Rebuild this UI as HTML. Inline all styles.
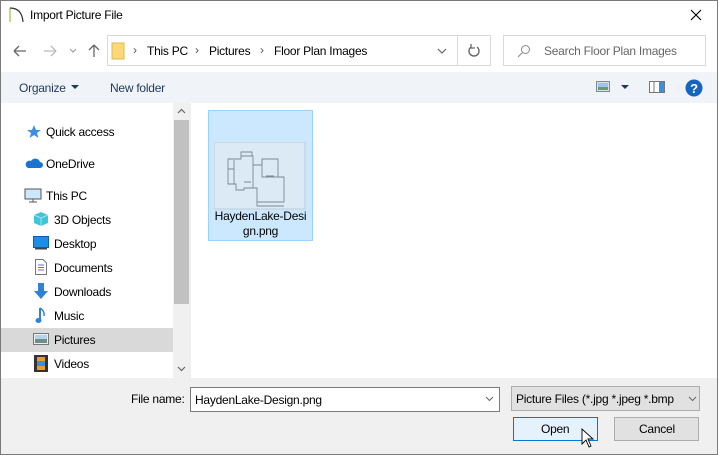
<!DOCTYPE html>
<html><head><style>
*{margin:0;padding:0;box-sizing:border-box}
body{width:718px;height:455px;overflow:hidden;font-family:"Liberation Sans",sans-serif;font-size:12px;color:#000;background:#fff;position:relative;letter-spacing:-0.25px}
.a{position:absolute;white-space:nowrap}
.win{position:absolute;left:0;top:0;width:718px;height:455px;border:1px solid #7a7a7a}
.nav .t{position:absolute;left:54px;font-size:12px}
</style></head><body>
<div class="win"></div>
<svg class="a" style="left:8px;top:6px" width="18" height="18"><path d="M2 2 V16" stroke="#8dc63f" stroke-width="1.2"/><path d="M2 2 Q14 2 15 16" stroke="#333" stroke-width="1.2" fill="none"/></svg>
<div class="a" style="left:30px;top:8px;font-size:12px">Import Picture File</div>
<svg class="a" style="left:690px;top:9px" width="12" height="12"><path d="M1 1L11 11M11 1L1 11" stroke="#000" stroke-width="1.1"/></svg>
<svg class="a" style="left:12px;top:43px" width="90" height="16"><path d="M2 8H14M2 8L7 3M2 8L7 13" stroke="#666" stroke-width="1.3" fill="none"/><path d="M32 8H44M44 8L39 3M44 8L39 13" stroke="#bbb" stroke-width="1.3" fill="none"/><path d="M58 6L61 9L64 6" stroke="#999" stroke-width="1.1" fill="none"/><path d="M82 14V2M82 2L77 7M82 2L87 7" stroke="#666" stroke-width="1.3" fill="none"/></svg>
<div class="a" style="left:107px;top:35px;width:384px;height:31px;border:1px solid #d9d9d9"></div>
<div class="a" style="left:457px;top:36px;width:1px;height:29px;background:#d9d9d9"></div>
<svg class="a" style="left:111px;top:42px" width="14" height="18"><rect x="1" y="1" width="12" height="16" fill="#fbd979" stroke="#e0b846"/></svg>
<div class="a" style="left:133px;top:43px;font-size:12px;color:#555">›</div>
<div class="a" style="left:147px;top:44px">This PC</div>
<div class="a" style="left:195px;top:43px;color:#555">›</div>
<div class="a" style="left:209px;top:44px">Pictures</div>
<div class="a" style="left:260px;top:43px;color:#555">›</div>
<div class="a" style="left:274px;top:44px">Floor Plan Images</div>
<svg class="a" style="left:437px;top:47px" width="10" height="8"><path d="M1 2L5 6L9 2" stroke="#666" stroke-width="1.2" fill="none"/></svg>
<svg class="a" style="left:467px;top:43px" width="14" height="16"><path d="M10 4A5 5 0 1 1 4 4" stroke="#666" stroke-width="1.4" fill="none"/><path d="M4 1V5H8" stroke="#666" stroke-width="1.3" fill="none"/></svg>
<div class="a" style="left:503px;top:35px;width:203px;height:31px;border:1px solid #d9d9d9"></div>
<svg class="a" style="left:517px;top:44px" width="14" height="14"><circle cx="8.5" cy="5.5" r="4" stroke="#888" fill="none"/><path d="M5.5 8.5L1 13" stroke="#888"/></svg>
<div class="a" style="left:544px;top:44px;color:#666">Search Floor Plan Images</div>
<div class="a" style="left:1px;top:72px;width:716px;height:31px;background:#f0f4f9"></div>
<div class="a" style="left:19px;top:81px;color:#1e395b">Organize</div>
<svg class="a" style="left:71px;top:85px" width="8" height="5"><path d="M0 0H8L4 4Z" fill="#1e395b"/></svg>
<div class="a" style="left:110px;top:81px;color:#1e395b">New folder</div>
<svg class="a" style="left:596px;top:81px" width="14" height="12"><rect x="0.5" y="0.5" width="13" height="10" fill="#dde" stroke="#7a8a9a"/><rect x="2" y="6" width="10" height="3" fill="#6a9a6a"/><rect x="2" y="2" width="10" height="4" fill="#9ec5e8"/></svg>
<svg class="a" style="left:621px;top:85px" width="8" height="5"><path d="M0 0H8L4 4Z" fill="#1e395b"/></svg>
<svg class="a" style="left:649px;top:81px" width="17" height="13"><rect x="0.5" y="0.5" width="15" height="11" fill="#fff" stroke="#777"/><rect x="10" y="1" width="5" height="10" fill="#3c8ee0"/><path d="M5 1V12" stroke="#777"/></svg>
<svg class="a" style="left:685px;top:79px" width="18" height="18"><circle cx="9" cy="9" r="8.5" fill="#1565c0"/><text x="9" y="14" text-anchor="middle" font-family="Liberation Sans" font-weight="bold" font-size="13" fill="#fff">?</text></svg>
<div class="a" style="left:1px;top:328px;width:172px;height:24px;background:#d9d9d9"></div>
<div class="a" style="left:173px;top:103px;width:17px;height:275px;background:#f0f0f0"></div>
<div class="a" style="left:174px;top:120px;width:15px;height:184px;background:#c1c1c1"></div>
<svg class="a" style="left:177px;top:108px" width="9" height="6"><path d="M1 5L4.5 1.5L8 5" stroke="#666" stroke-width="1.2" fill="none"/></svg>
<svg class="a" style="left:177px;top:366px" width="9" height="6"><path d="M1 1L4.5 4.5L8 1" stroke="#666" stroke-width="1.2" fill="none"/></svg>
<div class="a" style="left:190px;top:103px;width:1px;height:275px;background:#eee"></div>
<div class="nav">
<svg class="a" style="left:26px;top:124px" width="16" height="16"><path d="M8 1L10 6H15L11 9L12.5 14L8 11L3.5 14L5 9L1 6H6Z" fill="#3a8ee6"/></svg>
<div class="a" style="left:46px;top:125px">Quick access</div>
<svg class="a" style="left:25px;top:157px" width="18" height="12"><path d="M3 11H15A3 3 0 0 0 15 5A5 5 0 0 0 6 4A3.5 3.5 0 0 0 3 11Z" fill="#1a73d0"/></svg>
<div class="a" style="left:46px;top:157px">OneDrive</div>
<svg class="a" style="left:24px;top:188px" width="18" height="16"><rect x="1" y="1" width="16" height="10" fill="#cce8ff" stroke="#555"/><path d="M9 11V14M5 14H13" stroke="#555"/></svg>
<div class="a" style="left:46px;top:189px">This PC</div>
<svg class="a" style="left:33px;top:211px" width="16" height="16"><path d="M8 1L15 4V12L8 15L1 12V4Z" fill="#3fc5d8"/><path d="M1 4L8 7L15 4M8 7V15" stroke="#9ee6f0" fill="none"/></svg>
<div class="t a" style="top:213px">3D Objects</div>
<svg class="a" style="left:33px;top:236px" width="16" height="14"><rect x="0.5" y="0.5" width="15" height="11" fill="#1b8ee6" stroke="#0a5fa8"/><rect x="2" y="12" width="12" height="1.5" fill="#444"/></svg>
<div class="t a" style="top:237px">Desktop</div>
<svg class="a" style="left:35px;top:259px" width="12" height="16"><path d="M0.5 0.5H8L11.5 4V15.5H0.5Z" fill="#fff" stroke="#777"/><path d="M3 6H9M3 8.5H9M3 11H9" stroke="#4a7fc0"/></svg>
<div class="t a" style="top:261px">Documents</div>
<svg class="a" style="left:33px;top:283px" width="16" height="17"><path d="M5 0H11V8H15L8 16L1 8H5Z" fill="#2f82d8"/></svg>
<div class="t a" style="top:285px">Downloads</div>
<svg class="a" style="left:35px;top:307px" width="12" height="17"><path d="M5 1V13" stroke="#2f82d8" stroke-width="2"/><ellipse cx="3.5" cy="13.5" rx="3" ry="2.5" fill="#2f82d8"/><path d="M5 1Q10 4 9 9" stroke="#2f82d8" stroke-width="1.5" fill="none"/></svg>
<div class="t a" style="top:309px">Music</div>
<svg class="a" style="left:33px;top:333px" width="16" height="12"><rect x="0.5" y="0.5" width="15" height="11" fill="#eee" stroke="#777"/><rect x="2" y="6" width="12" height="4" fill="#6e8e86"/><rect x="2" y="2" width="12" height="4" fill="#b7d3ea"/></svg>
<div class="t a" style="top:333px">Pictures</div>
<svg class="a" style="left:34px;top:355px" width="14" height="17"><rect x="0" y="0" width="14" height="17" fill="#333"/><rect x="3" y="2" width="8" height="13" fill="#e0a030"/><rect x="3" y="6" width="8" height="5" fill="#3a8ee6"/></svg>
<div class="t a" style="top:357px">Videos</div>
</div>
<div class="a" style="left:208px;top:110px;width:105px;height:131px;background:#cce8ff;border:1px solid #99d1ff"></div>
<svg class="a" style="left:214px;top:142px" width="92" height="68"><rect x="0" y="0" width="91" height="67" fill="#dceaf6" stroke="#c0ccd8"/><g stroke="#7d8893" fill="none" stroke-width="0.9"><path d="M14 17H27V14H39V23H48V17H64V35H70V60H43V46H30V48H22V42H14Z"/><path d="M27 14V10H38V14"/><path d="M39 23V46H43"/><path d="M48 17V35H64"/><path d="M14 27H20M30 40H37"/><path d="M20 18V42M52 34H60"/><path d="M43 60V64H70"/></g></svg>
<div class="a" style="left:209px;top:209px;width:103px;text-align:center;line-height:15px;font-size:12px;white-space:normal">HaydenLake-Desi<br>gn.png</div>
<div class="a" style="left:1px;top:378px;width:716px;height:76px;background:#f0f0f0"></div>
<div class="a" style="left:131px;top:392px">File name:</div>
<div class="a" style="left:190px;top:387px;width:310px;height:25px;background:#fff;border:1px solid #7a7a7a"></div>
<div class="a" style="left:195px;top:393px">HaydenLake-Design.png</div>
<svg class="a" style="left:485px;top:396px" width="9" height="6"><path d="M1 1L4.5 4.5L8 1" stroke="#666" fill="none"/></svg>
<div class="a" style="left:511px;top:386px;width:189px;height:25px;background:#e1e1e1;border:1px solid #adadad"></div>
<div class="a" style="left:516px;top:392px">Picture Files (*.jpg *.jpeg *.bmp</div>
<svg class="a" style="left:688px;top:396px" width="9" height="6"><path d="M1 1L4.5 4.5L8 1" stroke="#666" fill="none"/></svg>
<div class="a" style="left:513px;top:417px;width:85px;height:24px;background:#e5f1fb;border:1px solid #0078d7"></div>
<div class="a" style="left:541px;top:422px">Open</div>
<div class="a" style="left:614px;top:417px;width:85px;height:24px;background:#e1e1e1;border:1px solid #adadad"></div>
<div class="a" style="left:639px;top:422px">Cancel</div>
<svg class="a" style="left:581px;top:428px" width="14" height="22"><path d="M1 1V16L5 12L8 19L10 18L7 11H12Z" fill="#fff" stroke="#000" stroke-width="0.9"/></svg>
</body></html>
